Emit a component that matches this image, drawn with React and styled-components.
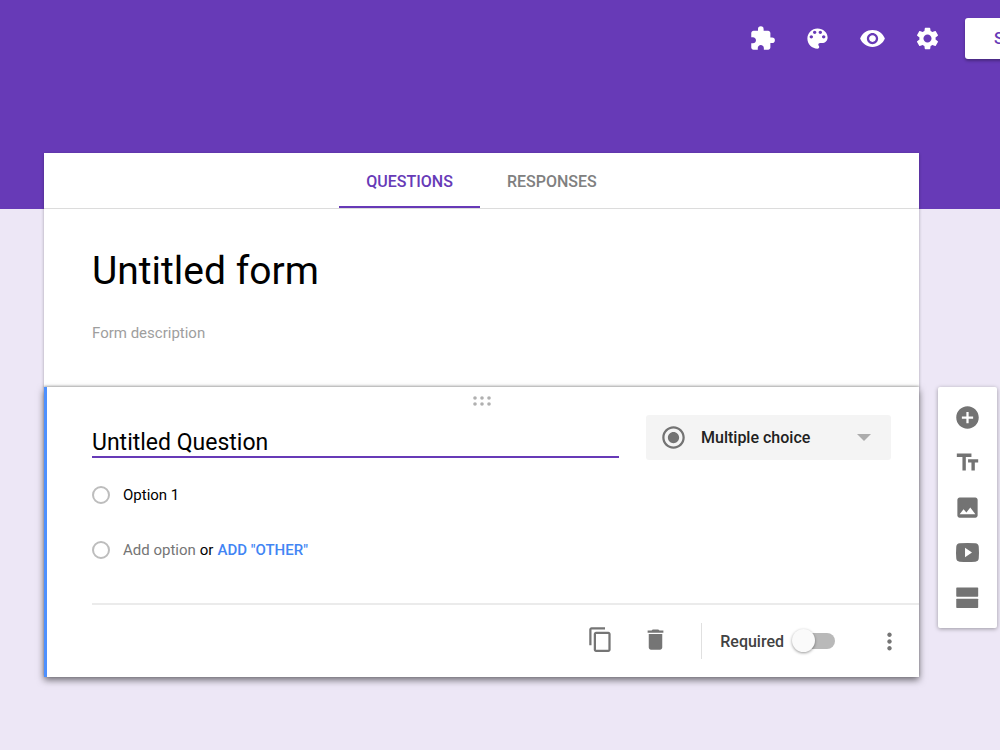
import { useState } from 'react'
import styled, { createGlobalStyle } from 'styled-components'
import {
  MdAddCircle,
  MdContentCopy,
  MdDelete,
  MdExtension,
  MdImage,
  MdMoreVert,
  MdRadioButtonChecked,
  MdSettings,
  MdVisibility,
} from 'react-icons/md'

const GlobalStyle = createGlobalStyle`
  *, *::before, *::after {
    box-sizing: border-box;
  }

  body {
    margin: 0;
    background: #ede7f6;
    color: #000;
    font-family: Roboto, 'Liberation Sans', sans-serif;
    font-size: 16px;
  }

  button, input, select {
    margin: 0;
    padding: 0;
    border: 0;
    outline: 0;
    background: none;
    color: inherit;
    font: inherit;
  }

  button, select {
    cursor: pointer;
  }
`

const Page = styled.div`
  min-height: 100vh;
  overflow: hidden;
  background: linear-gradient(#673ab7 209px, #ede7f6 209px);
`

const TopBar = styled.header`
  display: flex;
  justify-content: flex-end;
  align-items: center;
  gap: 24px;
  height: 77px;
  margin-right: -64px;
  color: #fff;
`

const TopActions = styled.div`
  display: flex;
  gap: 28px;
`

const IconButton = styled.button`
  display: flex;
  align-items: center;
  justify-content: center;
  width: 27px;
  height: 27px;

  svg {
    display: block;
    flex: none;
  }
`

const SendButton = styled.button`
  width: 99px;
  height: 41px;
  padding-left: 29px;
  border-radius: 3px;
  background: #fff;
  color: #673ab7;
  font-weight: 500;
  text-align: left;
  box-shadow: 0 2px 3px rgba(0, 0, 0, 0.3);
`

const Layout = styled.main`
  display: grid;
  grid-template-columns: minmax(0, 1fr) 59px;
  column-gap: 19px;
  align-items: start;
  padding: 76px 3px 72px 44px;
`

const FormHeader = styled.section`
  grid-column: 1;
  background: #fff;
  box-shadow: 0 1px 3px rgba(0, 0, 0, 0.3);
`

const Tabs = styled.nav`
  display: flex;
  justify-content: center;
  height: 56px;
  border-bottom: 1px solid #dcdcdc;
`

const Tab = styled.button`
  padding: 3px 27px 0;
  border-bottom: 2px solid ${({ $active }) => ($active ? '#673ab7' : 'transparent')};
  color: ${({ $active }) => ($active ? '#673ab7' : '#808080')};
  font-weight: 500;
`

const FormIntro = styled.div`
  display: flex;
  flex-direction: column;
  gap: 26px;
  padding: 36px 48px 44px;
`

const TitleInput = styled.input`
  width: 100%;
  height: 52px;
  font-size: 39px;
`

const DescriptionInput = styled.input`
  width: 100%;
  height: 20px;
  font-size: 15px;

  &::placeholder {
    color: #9e9e9e;
    opacity: 1;
  }
`

const QuestionCard = styled.section`
  position: relative;
  grid-column: 1;
  border-left: 3px solid #4d90fe;
  background: #fff;
  box-shadow: 0 -1px 2px rgba(0, 0, 0, 0.25), 0 3px 7px rgba(0, 0, 0, 0.55);
`

const DragHandle = styled.div`
  display: flex;
  justify-content: center;
  height: 28px;
  padding: 9px 3px 0 0;
`

const QuestionBody = styled.div`
  display: flex;
  flex-direction: column;
  padding: 0 28px 26px 45px;
`

const QuestionRow = styled.div`
  display: flex;
  align-items: flex-start;
  gap: 27px;
  margin-bottom: 26px;
`

const QuestionInput = styled.input`
  flex: 1;
  min-width: 0;
  height: 43px;
  padding-top: 14px;
  border-bottom: 2px solid #673ab7;
  font-size: 23px;
`

const TypePicker = styled.label`
  display: flex;
  align-items: center;
  gap: 14px;
  width: 245px;
  height: 45px;
  padding: 0 20px 0 14px;
  border-radius: 3px;
  background: #f4f4f4;
  color: #737373;
`

const TypeSelect = styled.select`
  flex: 1;
  min-width: 0;
  appearance: none;
  color: #212121;
  font-weight: 500;
`

const OptionRow = styled.div`
  display: flex;
  align-items: center;
  gap: 13px;
  height: 18px;
  margin-bottom: ${({ $last }) => ($last ? '18px' : '37px')};
`

const Radio = styled.input`
  flex: none;
  width: 18px;
  height: 18px;
  border: 2px solid #bdbdbd;
  border-radius: 50%;
  appearance: none;
`

const OptionInput = styled.input`
  flex: 1;
  height: 20px;
  font-size: 15px;
`

const AddOption = styled.div`
  display: flex;
  gap: 4px;
  font-size: 15px;
`

const AddButton = styled.button`
  color: #757575;
`

const AddOther = styled.button`
  color: #4285f4;
  font-weight: 500;
`

const CardFooter = styled.footer`
  display: flex;
  align-items: center;
  justify-content: flex-end;
  height: 74px;
  margin-left: 45px;
  padding-right: 16px;
  border-top: 2px solid #ebebeb;
  color: #757575;
`

const FooterActions = styled.div`
  display: flex;
  gap: 28px;
  padding: 0 32px 4px 0;
`

const RequiredLabel = styled.label`
  display: flex;
  align-items: center;
  gap: 10px;
  height: 36px;
  margin-right: 41px;
  padding-left: 18px;
  border-left: 1px solid #e0e0e0;
  color: #424242;
  font-weight: 500;
`

const Switch = styled.input`
  position: relative;
  width: 41px;
  height: 16px;
  border-radius: 8px;
  background: ${({ checked }) => (checked ? '#b39ddb' : '#b9b9b9')};
  appearance: none;
  cursor: pointer;

  &::before {
    content: '';
    position: absolute;
    top: -4px;
    left: ${({ checked }) => (checked ? '19px' : '-2px')};
    width: 23px;
    height: 23px;
    border-radius: 50%;
    background: ${({ checked }) => (checked ? '#673ab7' : '#fafafa')};
    box-shadow: 0 1px 3px rgba(0, 0, 0, 0.4);
  }
`

const SideTools = styled.aside`
  display: flex;
  flex-direction: column;
  align-items: center;
  gap: 18px;
  padding: 17px 0;
  border-radius: 2px;
  background: #fff;
  color: #737373;
  box-shadow: 0 1px 4px rgba(0, 0, 0, 0.35);
`

const PaletteIcon = () => (
  <svg width="27" height="27" viewBox="0 0 24 24" fill="currentColor">
    <path d="M12 3c-4.970 0-9 4.030-9 9s4.030 9 9 9c.83 0 1.500-.67 1.500-1.500 0-.39-.15-.74-.39-1.010-.23-.26-.38-.61-.38-.99 0-.83.67-1.500 1.500-1.500H16c2.760 0 5-2.240 5-5 0-4.420-4.030-8-9-8zm-5.500 9c-.83 0-1.500-.67-1.500-1.500S5.670 9 6.500 9 8 9.670 8 10.500 7.330 12 6.500 12zm3-4C8.670 8 8 7.330 8 6.500S8.670 5 9.500 5s1.500.67 1.500 1.500S10.330 8 9.500 8zm5 0c-.83 0-1.500-.67-1.500-1.500S13.670 5 14.500 5s1.500.67 1.500 1.500S15.330 8 14.500 8zm3 4c-.83 0-1.500-.67-1.500-1.500S16.670 9 17.500 9s1.500.67 1.500 1.500-.67 1.500-1.500 1.500z" />
  </svg>
)

const TextFieldsIcon = () => (
  <svg width="27" height="27" viewBox="0 0 24 24" fill="currentColor">
    <path d="M2.500 4v3h5v12h3V7h5V4h-13zm19 5h-9v3h3v7h3v-7h3V9z" />
  </svg>
)

const VideoIcon = () => (
  <svg width="27" height="27" viewBox="0 0 24 24" fill="currentColor">
    <path d="M5 3.800Q12 3.200 19 3.800Q21.700 4 22 6.800Q22.400 12 22 17.200Q21.700 20 19 20.200Q12 20.800 5 20.200Q2.300 20 2 17.200Q1.600 12 2 6.800Q2.300 4 5 3.800zM9.800 7.800v8.400l6.200-4.200z" />
  </svg>
)

const SectionIcon = () => (
  <svg width="27" height="27" viewBox="0 0 24 24" fill="currentColor">
    <rect x="2" y="3" width="19.500" height="8.300" rx="0.600" />
    <rect x="2" y="13" width="19.500" height="8.300" rx="0.600" />
  </svg>
)

const DotsIcon = () => (
  <svg width="18" height="10" viewBox="0 0 18 10" fill="#b0b0b0">
    {[2, 9, 16].map((x) => (
      <g key={x}>
        <circle cx={x} cy="2" r="1.800" />
        <circle cx={x} cy="8" r="1.800" />
      </g>
    ))}
  </svg>
)

const ArrowIcon = () => (
  <svg width="14" height="7" viewBox="0 0 14 7" fill="#acacac">
    <path d="M0 0h14L7 7z" />
  </svg>
)

const topActions = [
  { label: 'Add-ons', icon: <MdExtension size={27} /> },
  { label: 'Color palette', icon: <PaletteIcon /> },
  { label: 'Preview', icon: <MdVisibility size={27} /> },
  { label: 'Settings', icon: <MdSettings size={27} /> },
]

const sideActions = [
  { label: 'Add question', icon: <MdAddCircle size={27} /> },
  { label: 'Add title and description', icon: <TextFieldsIcon /> },
  { label: 'Add image', icon: <MdImage size={27} /> },
  { label: 'Add video', icon: <VideoIcon /> },
  { label: 'Add section', icon: <SectionIcon /> },
]

const App = () => {
  const [tab, setTab] = useState('QUESTIONS')
  const [required, setRequired] = useState(false)

  return (
    <Page>
      <GlobalStyle />
      <TopBar>
        <TopActions>
          {topActions.map(({ label, icon }) => (
            <IconButton key={label} type='button' aria-label={label}>{icon}</IconButton>
          ))}
        </TopActions>
        <SendButton type='button'>SEND</SendButton>
      </TopBar>

      <Layout>
        <FormHeader>
          <Tabs>
            {['QUESTIONS', 'RESPONSES'].map((name) => (
              <Tab key={name} type='button' $active={tab === name} onClick={() => setTab(name)}>
                {name}
              </Tab>
            ))}
          </Tabs>
          <FormIntro>
            <TitleInput aria-label='Form title' defaultValue='Untitled form' />
            <DescriptionInput aria-label='Form description' placeholder='Form description' />
          </FormIntro>
        </FormHeader>

        <QuestionCard>
          <DragHandle><DotsIcon /></DragHandle>
          <QuestionBody>
            <QuestionRow>
              <QuestionInput aria-label='Question' defaultValue='Untitled Question' />
              <TypePicker>
                <MdRadioButtonChecked size={27} />
                <TypeSelect aria-label='Question type' defaultValue='Multiple choice'>
                  <option>Multiple choice</option>
                  <option>Checkboxes</option>
                  <option>Dropdown</option>
                </TypeSelect>
                <ArrowIcon />
              </TypePicker>
            </QuestionRow>
            <OptionRow>
              <Radio type='radio' disabled aria-label='Option 1' />
              <OptionInput aria-label='Option 1 text' defaultValue='Option 1' />
            </OptionRow>
            <OptionRow $last>
              <Radio type='radio' disabled aria-label='New option' />
              <AddOption>
                <AddButton type='button'>Add option</AddButton>
                <span>or</span>
                <AddOther type='button'>ADD "OTHER"</AddOther>
              </AddOption>
            </OptionRow>
          </QuestionBody>
          <CardFooter>
            <FooterActions>
              <IconButton type='button' aria-label='Duplicate'><MdContentCopy size={27} /></IconButton>
              <IconButton type='button' aria-label='Delete'><MdDelete size={27} /></IconButton>
            </FooterActions>
            <RequiredLabel>
              Required
              <Switch
                type='checkbox'
                checked={required}
                onChange={(e) => setRequired(e.target.checked)}
              />
            </RequiredLabel>
            <IconButton type='button' aria-label='More options'><MdMoreVert size={27} /></IconButton>
          </CardFooter>
        </QuestionCard>

        <SideTools>
          {sideActions.map(({ label, icon }) => (
            <IconButton key={label} type='button' aria-label={label}>{icon}</IconButton>
          ))}
        </SideTools>
      </Layout>
    </Page>
  )
}

export default App
